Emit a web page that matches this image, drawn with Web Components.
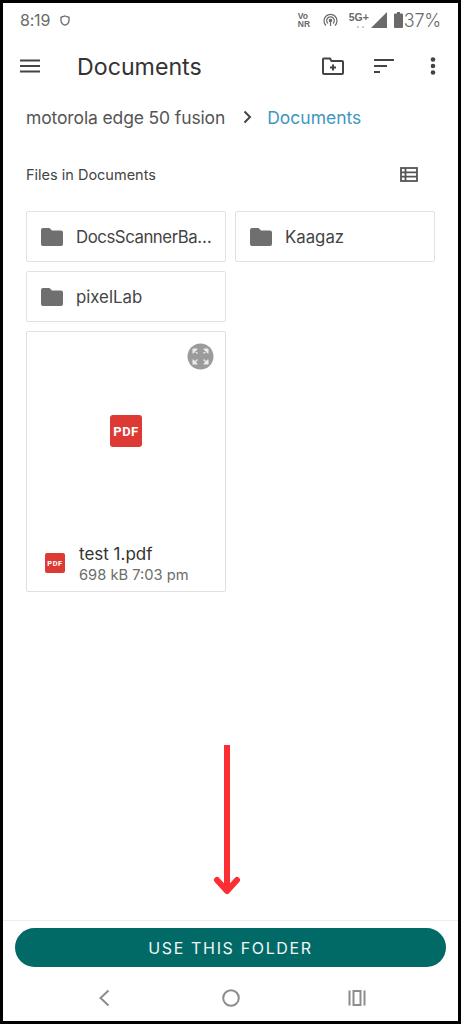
<!DOCTYPE html>
<html>
<head>
<meta charset="utf-8">
<style>
  html, body { margin: 0; padding: 0; background: #000; }
  body { width: 461px; height: 1024px; font-family: Inter, "Liberation Sans", sans-serif; }
</style>
</head>
<body>
<app-screen>
  <status-bar></status-bar>
  <top-bar title="Documents"></top-bar>
  <bread-crumb root="motorola edge 50 fusion" current="Documents"></bread-crumb>
  <section-head label="Files in Documents"></section-head>
  <file-grid>
    <folder-card name="DocsScannerBa…" style="--tight:-.45px"></folder-card>
    <folder-card name="Kaagaz"></folder-card>
    <folder-card name="pixelLab"></folder-card>
    <div></div>
    <pdf-card name="test 1.pdf" meta="698 kB 7:03 pm"></pdf-card>
  </file-grid>
  <down-arrow></down-arrow>
  <action-bar label="USE THIS FOLDER"></action-bar>
  <nav-bar></nav-bar>
</app-screen>

<script>
function define(name, html) {
  customElements.define(name, class extends HTMLElement {
    connectedCallback() {
      this.attachShadow({ mode: 'open' });
      // {{attr}} placeholders are filled from the element's attributes
      this.shadowRoot.innerHTML = html.replace(/\{\{(\w+)\}\}/g, (m, a) => this.getAttribute(a) || '');
    }
  });
}

const pdfIcon = (size, fs, radius) => `
  <span style="width:${size}px;height:${size}px;border-radius:${radius}px;background:#dd3a35;color:#fff;display:flex;align-items:center;justify-content:center;font:700 ${fs}px 'Roboto',sans-serif;letter-spacing:.5px;flex:none">PDF</span>`;

define('app-screen', `
  <style>
    :host {
      display: flex; flex-direction: column;
      box-sizing: border-box; width: 455px; height: 1018px; margin: 3px;
      background: #fff; color: #3c3c3c;
      font-family: Inter, "Liberation Sans", sans-serif;
    }
  </style>
  <slot></slot>`);

define('status-bar', `
  <style>
    :host { display: flex; align-items: center; height: 34px; padding: 0 17px; color: #6a6a6a; flex: none; }
    .time { font-size: 16px; letter-spacing: -.2px; }
    .shield { margin-left: 10px; }
    .right { margin-left: auto; display: flex; align-items: center; }
    .vo { font: 700 8.5px/8px "Liberation Sans", sans-serif; width: 16px; margin-right: 9px; }
    .g { position: relative; width: 19px; margin: 0 3px 0 11px; font: 700 10.5px/1 "Liberation Sans", sans-serif; white-space: nowrap; top: -3px; }
    .g i { position: absolute; left: 8px; top: 14px; width: 2px; height: 2px; border-radius: 50%; background: #bbb; box-shadow: 5px 0 #bbb; }
    .pct { font-size: 18px; letter-spacing: -.2px; font-weight: 300; margin-left: 1px; }
    svg { display: block; }
  </style>
  <span class="time">8:19</span>
  <svg class="shield" width="10" height="11" viewBox="0 0 10 11"><path d="M5 1 9 2.3V5.500C9 8 7.2 9.500 5 10.200 2.800 9.500 1 8 1 5.500V2.300Z" fill="none" stroke="#6a6a6a" stroke-width="1.3"/></svg>
  <div class="right">
    <span class="vo">Vo<br>NR</span>
    <svg width="15" height="15" viewBox="0 0 15 15" fill="none" stroke="#6a6a6a" stroke-width="1.2"><path d="M3 12.500A6.500 6.500 0 1 1 12 12.500"/><path d="M5 10.500A3.800 3.800 0 1 1 10 10.500"/><circle cx="7.500" cy="7.500" r="1.200" fill="#6a6a6a"/><path d="M7.500 8V13"/></svg>
    <span class="g">5G+<i></i></span>
    <svg width="16" height="16" viewBox="0 0 16 16"><path d="M0 16 16 0V16Z" fill="#6a6a6a"/></svg>
    <svg style="margin-left:7px" width="9" height="16" viewBox="0 0 9 16"><path d="M3 0H6V1.500H8A1 1 0 0 1 9 2.500V15A1 1 0 0 1 8 16H1A1 1 0 0 1 0 15V2.500A1 1 0 0 1 1 1.500H3Z" fill="#6a6a6a"/></svg>
    <span class="pct">37%</span>
  </div>`);

define('top-bar', `
  <style>
    :host { display: flex; align-items: center; height: 58px; padding-left: 17px; flex: none; color: #333; }
    .menu { margin-right: 37px; }
    h1 { margin: 1px 0 0; font-size: 23.200px; font-weight: 400; }
    .acts { margin-left: auto; display: flex; align-items: center; }
    svg { display: block; }
  </style>
  <svg class="menu" width="20" height="14" viewBox="0 0 20 14" stroke="#444" stroke-width="1.8"><path d="M0 1.500H20M0 7H20M0 12.500H20"/></svg>
  <h1>{{title}}</h1>
  <div class="acts">
    <svg width="22" height="18" viewBox="0 0 22 18" fill="none" stroke="#444" stroke-width="2"><path d="M1 3V16a1 1 0 0 0 1 1H20a1 1 0 0 0 1-1V5a1 1 0 0 0-1-1H9.500L8 1.500H2A1 1 0 0 0 1 3Z"/><path d="M8 10.500H14M11 7.500V13.500"/></svg>
    <svg style="margin-left:30px" width="20" height="14" viewBox="0 0 20 14" fill="#444"><rect width="20" height="2"/><rect y="6" width="13" height="2"/><rect y="12" width="6" height="2"/></svg>
    <svg style="margin:0 22px 0 36px" width="6" height="18" viewBox="0 0 6 18" fill="#444"><circle cx="3" cy="2.500" r="2.300"/><circle cx="3" cy="9" r="2.300"/><circle cx="3" cy="15.500" r="2.300"/></svg>
  </div>`);

define('bread-crumb', `
  <style>
    :host { display: flex; align-items: center; height: 32px; padding-left: 23px; flex: none; font-size: 17.500px; color: #555; margin-top: 6px; }
    svg { margin: 0 15px 0 18px; display: block; }
    .root { letter-spacing: -.13px; }
    .cur { color: #3f97bd; }
  </style>
  <span class="root">{{root}}</span>
  <svg width="9" height="14" viewBox="0 0 9 14" fill="none" stroke="#444" stroke-width="2"><path d="M1.500 1.500 7 7 1.500 12.500"/></svg>
  <span class="cur">{{current}}</span>`);

define('section-head', `
  <style>
    :host { display: flex; align-items: center; justify-content: space-between; height: 30px; padding: 0 40px 0 23px; flex: none; font-size: 14.500px; color: #444; margin-top: 26px; }
    svg { display: block; }
  </style>
  <span>{{label}}</span>
  <svg width="18" height="15" viewBox="0 0 18 15" fill="none" stroke="#555" stroke-width="1.800"><rect x="1" y="1" width="16" height="13"/><path d="M1 5.300H17M1 9.700H17M5.500 1V14"/></svg>`);

define('file-grid', `
  <style>
    :host { display: grid; grid-template-columns: 200px 200px; column-gap: 9px; row-gap: 9px; padding: 0 0 0 23px; margin-top: 22px; flex: none; }
  </style>
  <slot></slot>`);

define('folder-card', `
  <style>
    :host { display: flex; align-items: center; box-sizing: border-box; height: 51px; border: 1px solid #e2e2e2; border-radius: 2px; padding-left: 14px; font-size: 16.800px; color: #444; }
    svg { display: block; margin-right: 13px; flex: none; }
    span { letter-spacing: var(--tight, 0); margin-top: 1px; }
  </style>
  <svg width="22" height="18" viewBox="0 0 22 18"><path d="M2 0H8.500L11 2.500H20A2 2 0 0 1 22 4.500V16A2 2 0 0 1 20 18H2A2 2 0 0 1 0 16V2A2 2 0 0 1 2 0Z" fill="#6f6f6f"/></svg>
  <span>{{name}}</span>`);

define('pdf-card', `
  <style>
    :host { display: flex; flex-direction: column; position: relative; box-sizing: border-box; height: 261px; border: 1px solid #e0e0e0; border-radius: 2px; }
    .thumb { flex: 1; display: flex; align-items: flex-start; justify-content: center; padding-top: 83px; }
    .badge { position: absolute; top: 11px; right: 11px; }
    .foot { display: flex; align-items: flex-start; box-sizing: border-box; height: 54px; padding: 7px 0 0 18px; }
    .foot > span { margin-top: 9px; }
    .txt { margin-left: 14px; }
    .n { font-size: 17px; color: #333; line-height: 21px; }
    .m { font-size: 14.700px; color: #6c6c6c; line-height: 21px; }
    svg { display: block; }
  </style>
  <div class="thumb">${pdfIcon(32, 13, 3)}</div>
  <svg class="badge" width="27" height="27" viewBox="0 0 27 27">
    <circle cx="13.500" cy="13.500" r="13" fill="#9b9b9b"/>
    <g fill="#ececec" stroke="#ececec" stroke-width="1.100" stroke-linejoin="round">
      <path d="M6 6H10L6 10Z M7 7 10.500 10.500"/>
      <path d="M21 6H17L21 10Z M20 7 16.500 10.500"/>
      <path d="M6 21H10L6 17Z M7 20 10.500 16.500"/>
      <path d="M21 21H17L21 17Z M20 20 16.500 16.500"/>
    </g>
  </svg>
  <div class="foot">
    ${pdfIcon(20, 7.500, 2)}
    <div class="txt"><div class="n">{{name}}</div><div class="m">{{meta}}</div></div>
  </div>`);

define('down-arrow', `
  <style>
    :host { display: flex; flex: 1; justify-content: flex-start; padding: 153px 0 0 210px; }
    svg { display: block; }
  </style>
  <svg width="28" height="150" viewBox="0 0 28 150" fill="none" stroke="#fb2f33" stroke-width="6" stroke-linejoin="round" stroke-linecap="round"><path d="M14 0V144" stroke-linecap="butt"/><path d="M4 135 14 146 24 135"/></svg>`);

define('action-bar', `
  <style>
    :host { display: block; flex: none; border-top: 1px solid #eee; padding: 7px 12px 0; height: 55px; box-sizing: border-box; }
    button { display: block; width: 100%; height: 39px; border: 0; border-radius: 20px; background: #016a66; color: #f2f5f5; font: 400 16px Inter, "Liberation Sans", sans-serif; letter-spacing: 1.650px; padding: 0; }
  </style>
  <button>{{label}}</button>`);

define('nav-bar', `
  <style>
    :host { display: flex; flex: none; height: 46px; align-items: center; justify-content: center; }
    svg { display: block; }
  </style>
  <svg width="270" height="18" viewBox="0 0 270 18" fill="none" stroke="#8c8c8c" stroke-width="2">
    <path d="M12.500 1.500 4.500 9 12.500 16.500"/>
    <circle cx="135" cy="9" r="7.800"/>
    <path d="M253.500 1.500V16.500M268.500 1.500V16.500"/>
    <rect x="257.500" y="2" width="7" height="14"/>
  </svg>`);
</script>
</body>
</html>
